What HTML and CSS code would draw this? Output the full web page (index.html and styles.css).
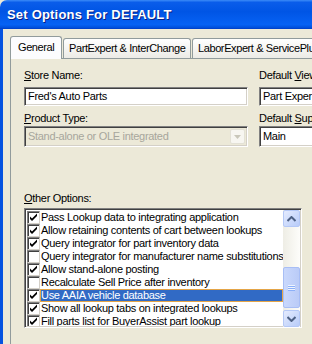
FILE: index.html
```html
<!DOCTYPE html>
<html lang="en">
<head>
  <meta charset="UTF-8">
  <title>Set Options For DEFAULT</title>
  <link rel="stylesheet" href="styles.css">
</head>
<body>
  <div class="window">
    <div class="titlebar">Set Options For DEFAULT</div>
    <div class="frame">
      <div class="tabs">
        <div class="tab active">General</div>
        <div class="tab tab-part">PartExpert &amp; InterChange</div>
        <div class="tab tab-labor">LaborExpert &amp; ServicePlus</div>
      </div>
      <div class="panel">
        <div class="fields">
          <div class="col col-left">
            <label class="label"><u>S</u>tore Name:</label>
            <div class="field">Fred's Auto Parts</div>
            <label class="label"><u>P</u>roduct Type:</label>
            <div class="field combo disabled">
              <span class="combo-text">Stand-alone or OLE integrated</span>
              <span class="combo-btn">
                <svg width="7" height="4" viewBox="0 0 7 4"><path d="M0 0h7L3.5 4z" fill="#C9C7BA"/></svg>
              </span>
            </div>
          </div>
          <div class="col col-right">
            <label class="label">Default <u>V</u>iew</label>
            <div class="field">Part Expert</div>
            <label class="label">Default <u>S</u>upplier</label>
            <div class="field combo">Main</div>
          </div>
        </div>

        <label class="label other-label"><u>O</u>ther Options:</label>
        <div class="listbox">
          <ul class="items">
            <li><span class="check on"></span><span class="item-text">Pass Lookup data to integrating application</span></li>
            <li><span class="check on"></span><span class="item-text">Allow retaining contents of cart between lookups</span></li>
            <li><span class="check on"></span><span class="item-text">Query integrator for part inventory data</span></li>
            <li><span class="check"></span><span class="item-text">Query integrator for manufacturer name substitutions</span></li>
            <li><span class="check on"></span><span class="item-text">Allow stand-alone posting</span></li>
            <li><span class="check"></span><span class="item-text">Recalculate Sell Price after inventory</span></li>
            <li class="selected"><span class="check on"></span><span class="item-text">Use AAIA vehicle database</span></li>
            <li><span class="check on"></span><span class="item-text">Show all lookup tabs on integrated lookups</span></li>
            <li><span class="check on"></span><span class="item-text">Fill parts list for BuyerAssist part lookup</span></li>
          </ul>
          <div class="scrollbar">
            <div class="sb-btn">
              <svg width="9" height="6" viewBox="0 0 9 6"><path d="M0.5 5L4.5 1L8.5 5" fill="none" stroke="#4D6185" stroke-width="2"/></svg>
            </div>
            <div class="sb-track">
              <div class="sb-thumb">
                <span class="grip"></span><span class="grip"></span><span class="grip"></span>
              </div>
            </div>
            <div class="sb-btn">
              <svg width="9" height="6" viewBox="0 0 9 6"><path d="M0.5 1L4.5 5L8.5 1" fill="none" stroke="#4D6185" stroke-width="2"/></svg>
            </div>
          </div>
        </div>
      </div>
    </div>
  </div>
</body>
</html>
```

FILE: styles.css
```css
body {
  margin: 0;
  width: 312px;
  height: 344px;
  overflow: hidden;
  background-color: #ECE9D8;
  font-family: "Liberation Sans", Arial, sans-serif;
  font-size: 11px;
  letter-spacing: -0.3px;
  color: #000;
}
.window {
  width: 340px;
  height: 344px;
  display: flex;
  flex-direction: column;
}
.titlebar {
  height: 29px;
  flex-shrink: 0;
  box-sizing: border-box;
  padding: 7px 0 0 7px;
  border-top-left-radius: 7px;
  background: linear-gradient(to bottom, #3C8CF8 0%, #0A5DEA 8%, #0055E5 40%, #0662F4 85%, #0050DC 95%, #003CC4 100%);
  color: #fff;
  font-family: "Liberation Sans", Arial, sans-serif;
  font-weight: bold;
  font-size: 13px;
  letter-spacing: 0.2px;
  text-shadow: 1px 1px 0 #0A1E80;
}
.frame {
  flex: 1;
  border-left: 3px solid #0653E0;
  background-color: #ECE9D8;
  padding: 7px 0 0 7px;
}
.tabs {
  display: flex;
  align-items: flex-end;
  height: 22px;
}
.tab {
  box-sizing: border-box;
  height: 20px;
  padding: 3px 0 0 5px;
  border: 1px solid #919B9C;
  border-bottom: none;
  border-radius: 3px 3px 0 0;
  background: linear-gradient(to bottom, #FFFFFF, #ECEBE6);
  white-space: nowrap;
  letter-spacing: -0.4px;
  margin-right: 1px;
}
.tab.active {
  width: 52px;
  height: 23px;
  padding: 4px 0 0 7px;
  background: #FCFCFE;
  position: relative;
  z-index: 1;
  margin-bottom: -1px;
}
.tab-part {
  width: 128px;
}
.tab-labor {
  width: 140px;
}
.panel {
  border: 1px solid #919B9C;
  border-bottom: none;
  border-right: none;
  background-color: #ECE9D8;
  padding: 10px 0 0 13px;
  height: 290px;
  box-sizing: border-box;
}
.fields {
  display: flex;
  gap: 11px;
}
.col-left {
  width: 224px;
}
.col-right {
  width: 70px;
}
.label {
  display: block;
  height: 13px;
  line-height: 13px;
  white-space: nowrap;
}
.field {
  box-sizing: border-box;
  height: 19px;
  margin: 5px 0 6px;
  padding: 2px 0 0 3px;
  line-height: 13px;
  background: #fff;
  border-top: 1px solid #808080;
  border-left: 1px solid #808080;
  border-bottom: 1px solid #FFFFFF;
  border-right: 1px solid #FFFFFF;
  box-shadow: inset 1px 1px 0 #404040, inset -1px -1px 0 #D4D0C8;
  white-space: nowrap;
  overflow: hidden;
}
.combo {
  height: 21px;
  margin: 1px 0 0;
  padding-top: 3px;
  display: flex;
}
.combo.disabled {
  background: #ECE9D8;
  color: #A7A69C;
  padding-right: 2px;
}
.combo-text {
  flex: 1;
}
.combo-btn {
  width: 15px;
  height: 15px;
  margin-top: -1px;
  box-sizing: border-box;
  border: 1px solid #E3E1D6;
  border-radius: 2px;
  background: #F7F6F1;
  display: flex;
  align-items: center;
  justify-content: center;
}
.other-label {
  margin-top: 45px;
}
.listbox {
  margin-top: 3px;
  width: 278px;
  height: 120px;
  box-sizing: border-box;
  display: flex;
  background: #fff;
  border-top: 1px solid #808080;
  border-left: 1px solid #808080;
  border-bottom: 1px solid #FFFFFF;
  border-right: 1px solid #FFFFFF;
  box-shadow: inset 1px 1px 0 #404040, inset -1px -1px 0 #D4D0C8;
  padding: 2px 1px 1px 2px;
}
.items {
  list-style: none;
  margin: 0;
  padding: 0;
  flex: 1;
  min-width: 0;
  overflow: hidden;
}
.items li {
  display: flex;
  align-items: center;
  height: 13px;
  white-space: nowrap;
}
.check {
  box-sizing: border-box;
  width: 13px;
  height: 13px;
  flex-shrink: 0;
  border-top: 1px solid #808080;
  border-left: 1px solid #808080;
  border-right: 1px solid #D4D0C8;
  border-bottom: 1px solid #D4D0C8;
  box-shadow: inset 1px 1px 0 #404040;
  background: #fff;
}
.check.on {
  background: #fff url("data:image/svg+xml;utf8,<svg xmlns='http://www.w3.org/2000/svg' width='11' height='11' viewBox='0 0 11 11'><path d='M2 4.5l2 2 5-5v2.5l-5 5-2-2z' fill='black'/></svg>") no-repeat 0 0;
}
.item-text {
  padding: 0 1px;
  line-height: 13px;
}
.selected {
  background: #316AC5;
}
.selected .item-text {
  flex: 1;
  color: #fff;
  box-sizing: border-box;
  height: 13px;
  line-height: 11px;
  border: 1px solid #E4A548;
  padding: 0;
}
.scrollbar {
  width: 17px;
  flex-shrink: 0;
  display: flex;
  flex-direction: column;
  background: linear-gradient(to right, #EEEDE5, #FDFDFA);
  margin: -1px 0;
}
.sb-btn {
  height: 17px;
  box-sizing: border-box;
  border: 1px solid #B4C8F6;
  border-radius: 2px;
  background: linear-gradient(to bottom right, #E4EBFE, #B8CCF9);
  display: flex;
  align-items: center;
  justify-content: center;
}
.sb-track {
  flex: 1;
  display: flex;
  flex-direction: column;
  justify-content: flex-end;
  padding-bottom: 2px;
}
.sb-thumb {
  height: 41px;
  box-sizing: border-box;
  border: 1px solid #A8BEF5;
  border-radius: 2px;
  background: linear-gradient(to right, #C9D8FC, #BACBF7);
  display: flex;
  flex-direction: column;
  align-items: center;
  justify-content: center;
  gap: 1px;
}
.grip {
  width: 7px;
  height: 1px;
  background: #EEF4FE;
  box-shadow: 0 1px 0 #8CB0F8;
}
```
